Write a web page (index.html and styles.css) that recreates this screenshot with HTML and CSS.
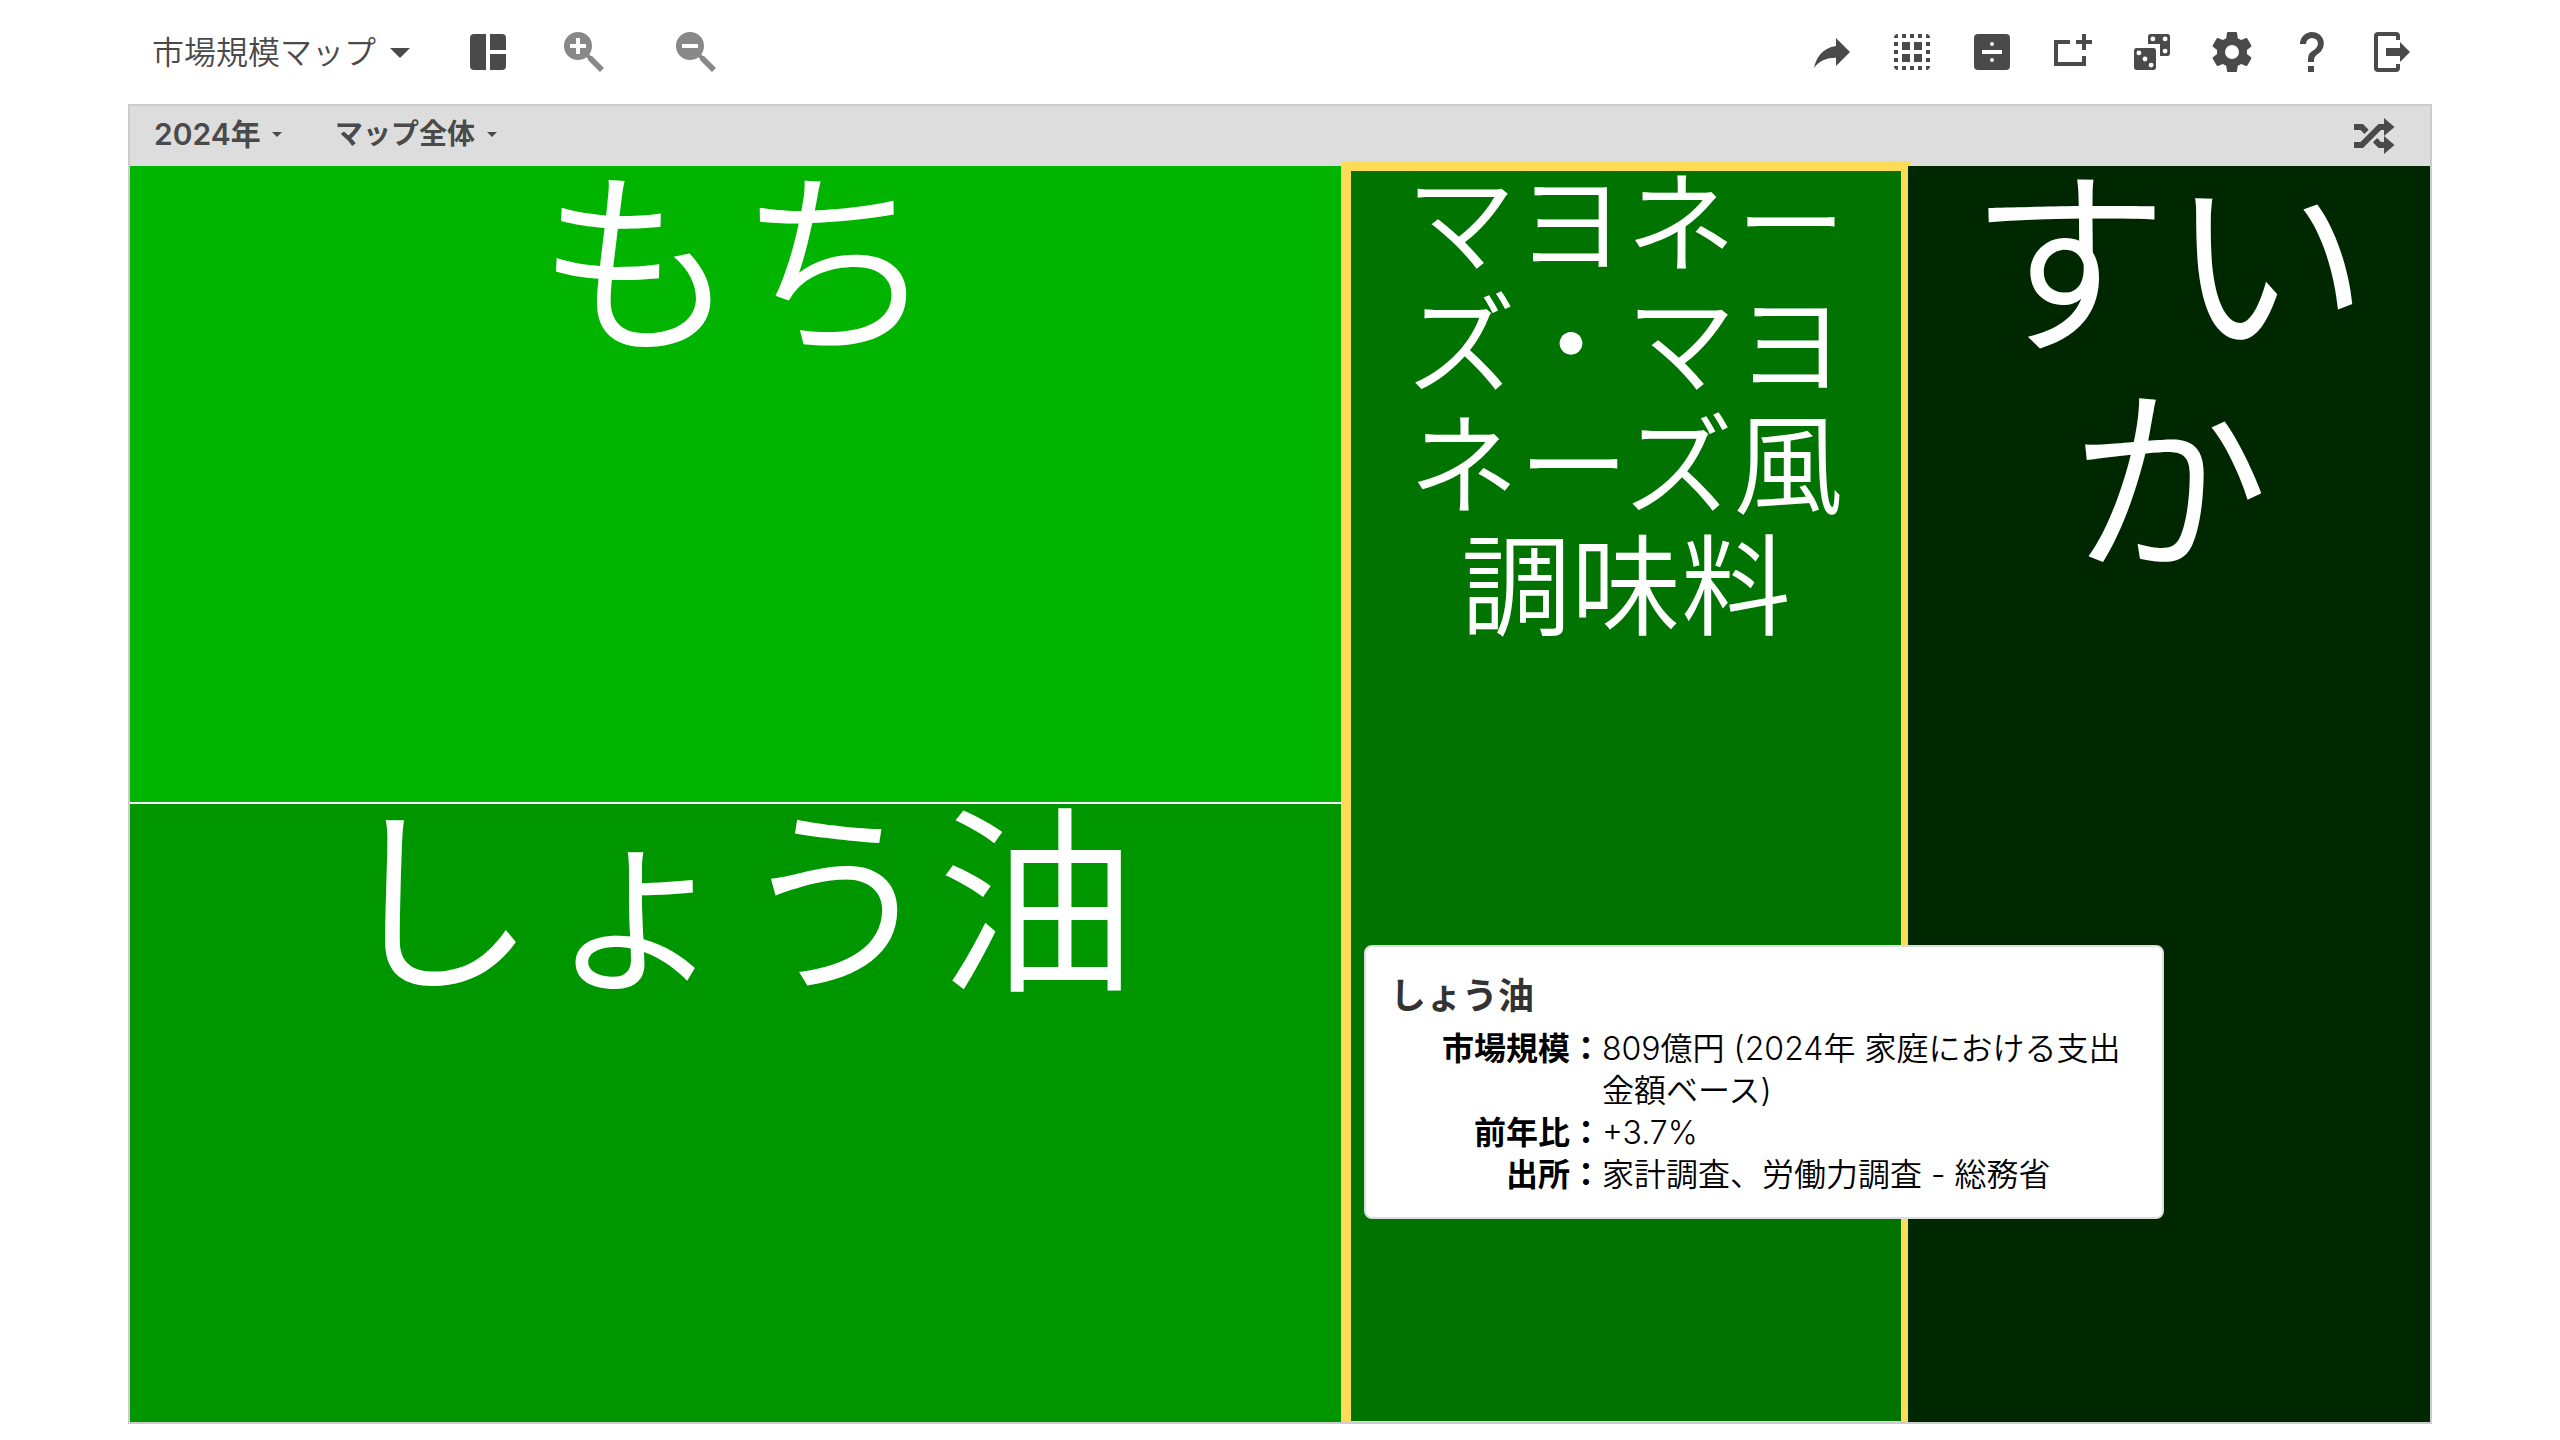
FILE: index.html
```html
<!DOCTYPE html>
<html lang="ja">
<head>
<meta charset="utf-8">
<meta name="viewport" content="width=device-width, initial-scale=1">
<title>市場規模マップ</title>
<link rel="stylesheet" href="styles.css">
</head>
<body>
<header class="toolbar">
  <button class="map-menu" type="button" aria-haspopup="menu"><span class="map-name">市場規模マップ</span><svg class="icon" viewBox="0 0 24 24"><path d="M7,10L12,15L17,10H7Z"/></svg></button>
  <div class="view-tools">
    <button class="tool" type="button" aria-label="レイアウト"><svg class="icon" viewBox="0 0 24 24"><path d="M13 3V11H21V5A2 2 0 0 0 19 3H13M13 21H19A2 2 0 0 0 21 19V13H13V21M3 19A2 2 0 0 0 5 21H11V3H5A2 2 0 0 0 3 5V19"/></svg></button>
    <button class="tool zoom-in" type="button" aria-label="拡大" disabled><svg class="icon" viewBox="0 0 24 24"><path d="M9,2A7,7 0 0,1 16,9C16,10.57 15.5,12 14.61,13.19L15.41,14H16L22,20L20,22L14,16V15.41L13.19,14.61C12,15.5 10.57,16 9,16A7,7 0 0,1 2,9A7,7 0 0,1 9,2M8,5V8H5V10H8V13H10V10H13V8H10V5H8Z"/></svg></button>
    <button class="tool zoom-out" type="button" aria-label="縮小" disabled><svg class="icon" viewBox="0 0 24 24"><path d="M9,2A7,7 0 0,1 16,9C16,10.57 15.5,12 14.61,13.19L15.41,14H16L22,20L20,22L14,16V15.41L13.19,14.61C12,15.5 10.57,16 9,16A7,7 0 0,1 2,9A7,7 0 0,1 9,2M5,8V10H13V8H5Z"/></svg></button>
  </div>
  <nav class="actions" aria-label="操作">
    <button class="action" type="button" aria-label="共有"><svg class="icon" viewBox="0 0 24 24"><path d="M21,12L14,5V9C7,10 4,15 3,20C5.5,16.5 9,14.9 14,14.9V19L21,12Z"/></svg></button>
    <button class="action" type="button" aria-label="選択"><svg class="icon" viewBox="0 0 24 24"><path d="M5 3A2 2 0 0 0 3 5H5M7 3V5H9V3M11 3V5H13V3M15 3V5H17V3M19 3V5H21A2 2 0 0 0 19 3M3 7V9H5V7M7 7V11H11V7M13 7V11H17V7M19 7V9H21V7M3 11V13H5V11M19 11V13H21V11M7 13V17H11V13M13 13V17H17V13M3 15V17H5V15M19 15V17H21V15M3 19A2 2 0 0 0 5 21V19M7 19V21H9V19M11 19V21H13V19M15 19V21H17V19M19 19V21A2 2 0 0 0 21 19"/></svg></button>
    <button class="action" type="button" aria-label="割合"><svg class="icon" viewBox="0 0 24 24"><path fill-rule="evenodd" d="M5 3H19A2 2 0 0 1 21 5V19A2 2 0 0 1 19 21H5A2 2 0 0 1 3 19V5A2 2 0 0 1 5 3M7 11V13H17V11ZM12 7A1 1 0 0 0 12 9A1 1 0 0 0 12 7M12 15A1 1 0 0 0 12 17A1 1 0 0 0 12 15"/></svg></button>
    <button class="action" type="button" aria-label="追加"><svg class="icon" viewBox="0 0 24 24"><path d="M19,6H22V8H19V11H17V8H14V6H17V3H19V6M17,17V14H19V19H3V6H11V8H5V17H17Z"/></svg></button>
    <button class="action" type="button" aria-label="ランダム"><svg class="icon" viewBox="0 0 24 24"><path d="M19.78,3H11.22C10.55,3 10,3.55 10,4.22V8H16V14H19.78C20.45,14 21,13.45 21,12.78V4.22C21,3.55 20.45,3 19.78,3M4.22,10H12.78A1.22,1.22 0 0,1 14,11.22V19.78C14,20.45 13.45,21 12.78,21H4.22C3.55,21 3,20.45 3,19.78V11.22C3,10.55 3.55,10 4.22,10"/><g class="pips"><circle cx="12.44" cy="5.44" r="1.22"/><circle cx="18.56" cy="5.44" r="1.22"/><circle cx="18.56" cy="11.56" r="1.22"/><circle cx="5.44" cy="12.44" r="1.22"/><circle cx="8.5" cy="15.5" r="1.22"/><circle cx="11.56" cy="18.56" r="1.22"/></g></svg></button>
    <button class="action" type="button" aria-label="設定"><svg class="icon" viewBox="0 0 24 24"><path d="M12,15.5A3.5,3.5 0 0,1 8.5,12A3.5,3.5 0 0,1 12,8.5A3.5,3.5 0 0,1 15.5,12A3.5,3.5 0 0,1 12,15.5M19.43,12.97C19.47,12.65 19.5,12.33 19.5,12C19.5,11.67 19.47,11.34 19.43,11L21.54,9.37C21.73,9.22 21.78,8.95 21.66,8.73L19.66,5.27C19.54,5.05 19.27,4.96 19.05,5.05L16.56,6.05C16.04,5.66 15.5,5.32 14.87,5.07L14.5,2.42C14.46,2.18 14.25,2 14,2H10C9.75,2 9.54,2.18 9.5,2.42L9.13,5.07C8.5,5.32 7.96,5.66 7.44,6.05L4.95,5.05C4.73,4.96 4.46,5.05 4.34,5.27L2.34,8.73C2.21,8.95 2.27,9.22 2.46,9.37L4.57,11C4.53,11.34 4.5,11.67 4.5,12C4.5,12.33 4.53,12.65 4.57,12.97L2.46,14.63C2.27,14.78 2.21,15.05 2.34,15.27L4.34,18.73C4.46,18.95 4.73,19.03 4.95,18.95L7.44,17.94C7.96,18.34 8.5,18.68 9.13,18.93L9.5,21.58C9.54,21.82 9.75,22 10,22H14C14.25,22 14.46,21.82 14.5,21.58L14.87,18.93C15.5,18.67 16.04,18.34 16.56,17.94L19.05,18.95C19.27,19.03 19.54,18.95 19.66,18.73L21.66,15.27C21.78,15.05 21.73,14.78 21.54,14.63L19.43,12.97Z"/></svg></button>
    <button class="action" type="button" aria-label="ヘルプ"><svg class="icon" viewBox="0 0 24 24"><path d="M10,19H13V22H10V19M12,2C17.35,2.22 19.68,7.62 16.5,11.67C15.67,12.67 14.33,13.33 13.67,14.17C13,15 13,16 13,17H10C10,15.33 10,13.92 10.67,12.92C11.33,11.92 12.67,11.33 13.5,10.67C15.92,8.43 15.32,5.26 12,5A3,3 0 0,0 9,8H6A6,6 0 0,1 12,2Z"/></svg></button>
    <button class="action" type="button" aria-label="終了"><svg class="icon" viewBox="0 0 24 24"><path d="M16,17V14H9V10H16V7L21,12L16,17M14,2A2,2 0 0,1 16,4V6H14V4H5V20H14V18H16V20A2,2 0 0,1 14,22H5A2,2 0 0,1 3,20V4A2,2 0 0,1 5,2H14Z"/></svg></button>
  </nav>
</header>
<main class="panel">
  <div class="filters">
    <div class="filter">
      <select class="filter-select year" aria-label="年"><option>2024年</option></select>
      <svg class="caret" viewBox="0 0 24 24"><path d="M7,10L12,15L17,10H7Z"/></svg>
    </div>
    <div class="filter">
      <select class="filter-select" aria-label="範囲"><option>マップ全体</option></select>
      <svg class="caret" viewBox="0 0 24 24"><path d="M7,10L12,15L17,10H7Z"/></svg>
    </div>
    <button class="shuffle" type="button" aria-label="シャッフル"><svg class="icon" viewBox="0 0 24 24"><path d="M17,3L22.25,7.5L17,12L22.25,16.5L17,21V18H14.26L11.44,15.18L13.56,13.06L15.5,15H17V9H15.5L6.5,18H2V15H5.26L14.26,6H17V3M2,6H6.5L9.32,8.82L7.2,10.94L5.26,9H2V6Z"/></svg></button>
  </div>
  <div class="map">
    <a class="cell mochi" href="#mochi"><span class="cell-name">もち</span></a>
    <a class="cell shoyu" href="#shoyu"><span class="cell-name">しょう油</span></a>
    <a class="cell mayonnaise" href="#mayonnaise"><span class="cell-name">マヨネーズ・マヨネーズ風調味料</span></a>
    <a class="cell suika" href="#suika"><span class="cell-name">すいか</span></a>
    <section class="tooltip" role="tooltip">
      <h2 class="tooltip-title">しょう油</h2>
      <dl class="facts">
        <dt>市場規模：</dt><dd>809億円 (2024年 家庭における支出金額ベース)</dd>
        <dt>前年比：</dt><dd>+3.7%</dd>
        <dt>出所：</dt><dd>家計調査、労働力調査 - 総務省</dd>
      </dl>
    </section>
  </div>
</main>
</body>
</html>
```
FILE: styles.css
```css
* { box-sizing: border-box; }

body {
  margin: 0;
  min-height: 100vh;
  padding: 0 5% 16px;
  display: flex;
  flex-direction: column;
  background: #fff;
  color: #4a4a4a;
  font-family: Inter, "Noto Sans CJK JP", sans-serif;
  font-size: 32px;
  font-weight: 350;
}

button,
select {
  margin: 0;
  padding: 0;
  border: 0;
  background: none;
  color: inherit;
  font: inherit;
}

.icon {
  display: block;
  width: 48px;
  height: 48px;
  fill: currentColor;
}

/* Top toolbar */
.toolbar {
  display: flex;
  align-items: center;
  height: 104px;
  padding-left: 24px;
}

.map-menu {
  display: flex;
  align-items: center;
}

.map-name { padding-bottom: 4px; }

.view-tools {
  display: flex;
  gap: 48px;
  margin-left: 40px;
}

.zoom-out { margin-left: 16px; }
.tool:disabled { color: #888; }

.actions {
  display: flex;
  margin-left: auto;
}

.action {
  display: flex;
  justify-content: center;
  width: 80px;
}

.pips { fill: #fff; }

/* Map panel */
.panel {
  flex: 1;
  display: flex;
  flex-direction: column;
  border: 2px solid #ccc;
}

.filters {
  display: flex;
  align-items: center;
  gap: 46px;
  height: 60px;
  padding: 0 32px 0 24px;
  background: #ddd;
}

.filter {
  display: flex;
  align-items: center;
  padding-bottom: 4px;
}

.filter-select {
  appearance: none;
  height: 40px;
  line-height: 40px;
  font-size: 28px;
  font-weight: 600;
}

.year { font-size: 30px; }

.caret {
  width: 24px;
  height: 24px;
  margin-left: 4px;
  fill: currentColor;
}

.shuffle { margin-left: auto; }

.map {
  position: relative;
  flex: 1;
  display: grid;
  grid-template-columns: minmax(0, 1214fr) minmax(0, 560fr) minmax(0, 522fr);
  grid-template-rows: 636fr 618fr;
  gap: 2px;
}

.cell {
  padding: 0 40px;
  color: #fff;
  font-family: "Noto Sans CJK JP", sans-serif;
  font-size: 200px;
  line-height: 218px;
  text-align: center;
  text-decoration: none;
  word-break: break-all;
  line-break: anywhere;
}

/* Pull the first line up against the top edge of the cell */
.cell-name {
  display: block;
  margin-top: -24px;
}

.mochi { background: #00b400; }
.shoyu { grid-row: 2; background: #009600; }

.mayonnaise {
  position: relative;
  grid-column: 2;
  grid-row: 1 / 3;
  background: #007300;
  font-size: 110px;
  line-height: 121px;
}

.mayonnaise .cell-name { margin-top: -10px; }

/* Highlight straddles the edge of the selected cell */
.mayonnaise::after {
  content: "";
  position: absolute;
  inset: -5px -5px 0;
  border: 10px solid #ffdc55;
  border-bottom-width: 1px;
}

.suika {
  position: relative;
  z-index: 1;
  grid-column: 3;
  grid-row: 1 / 3;
  background: #002800;
}

/* Tooltip */
.tooltip {
  position: absolute;
  z-index: 2;
  top: 62%;
  left: 1234px;
  width: 800px;
  padding: 25px 26px 21px 24px;
  border: 2px solid #ddd;
  border-radius: 8px;
  background: #fff;
  color: #000;
}

.tooltip-title {
  margin: 0 0 8px;
  color: #333;
  font-size: 36px;
  font-weight: 600;
  line-height: 48px;
}

.facts {
  display: grid;
  grid-template-columns: 212px 1fr;
  margin: 0;
  line-height: 42px;
}

.facts dt {
  font-weight: 700;
  text-align: right;
}

.facts dd { margin: 0; }
```
